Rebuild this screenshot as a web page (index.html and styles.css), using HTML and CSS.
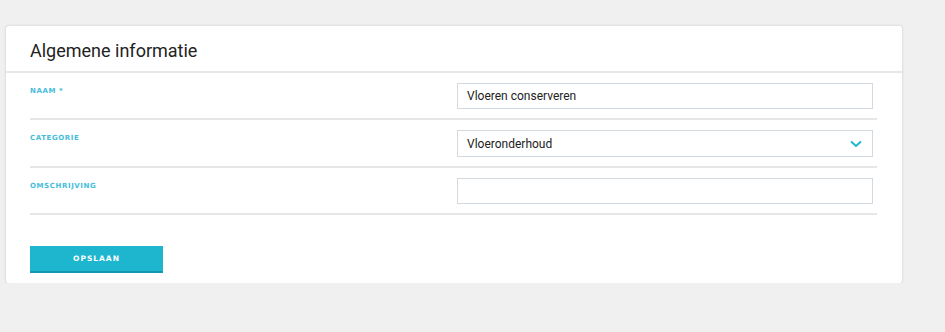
FILE: index.html
```html
<!DOCTYPE html>
<html>
	<head>
		<link rel="stylesheet" href="styles.css">
	</head>
	<body>
		<div id="card">
			<div class="header">
				<h1>Algemene informatie</h1>
			</div>
			<form class="fields" onsubmit="event.preventDefault();">
				<div class="row">
					<label class="label">Naam *</label>
					<input class="field" type="text" value="Vloeren conserveren">
				</div>
				<div class="row">
					<label class="label">Categorie</label>
					<div class="field select">
						<span>Vloeronderhoud</span>
						<svg class="chevron" width="12" height="8" viewBox="0 0 12 8">
							<path d="M1 1.5 L6 6 L11 1.5" fill="none" stroke="#1eb5cf" stroke-width="2"/>
						</svg>
					</div>
				</div>
				<div class="row">
					<label class="label">Omschrijving</label>
					<input class="field" type="text" value="">
				</div>
				<div class="actions">
					<button class="buton" type="submit">Opslaan</button>
				</div>
			</form>
		</div>
	</body>
</html>
```

FILE: styles.css
```css
body {
	margin: 0;
	background-color: #f0f0f0;
	font-family: Roboto, "Noto Sans", sans-serif;
	padding: 26px 0 0 6px;
}
#card {
	width: 896px;
	height: 257px;
	box-sizing: border-box;
	background-color: white;
	border-radius: 3px;
	box-shadow: 0 0 2px 1px rgba(0, 0, 0, 0.08);
}
.header {
	height: 45px;
	padding: 0 24px;
	border-bottom: 2px solid #e6e6e6;
	display: flex;
	align-items: center;
}
h1 {
	margin: 3px 0 0 0;
	font-size: 18px;
	font-weight: 400;
	color: #222;
}
.fields {
	padding: 0 24px;
	width: 847px;
}
.row {
	display: grid;
	grid-template-columns: 427px 416px;
	padding: 10px 0 9px 0;
	border-bottom: 2px solid #e6e6e6;
}
.label {
	font-family: "DejaVu Sans", sans-serif;
	font-size: 7px;
	font-weight: bold;
	letter-spacing: 0.6px;
	text-transform: uppercase;
	color: #45bddb;
	padding-top: 4px;
}
.field {
	box-sizing: border-box;
	height: 26px;
	margin: 0;
	border: 1px solid #d3d9e0;
	padding: 0 9px;
	font-family: Roboto, "Noto Sans", sans-serif;
	font-size: 12px;
	color: #222;
	outline: none;
}
.select {
	height: 27px;
	display: flex;
	align-items: center;
	justify-content: space-between;
}
.chevron {
	margin-right: 1px;
}
.actions {
	display: flex;
	padding-top: 31px;
}
.buton {
	width: 133px;
	height: 27px;
	border: none;
	border-bottom: 2px solid #1597ad;
	background-color: #1eb5cf;
	color: white;
	font-family: "DejaVu Sans", sans-serif;
	font-size: 7.5px;
	font-weight: bold;
	letter-spacing: 1px;
	text-transform: uppercase;
	padding: 0;
}
```
